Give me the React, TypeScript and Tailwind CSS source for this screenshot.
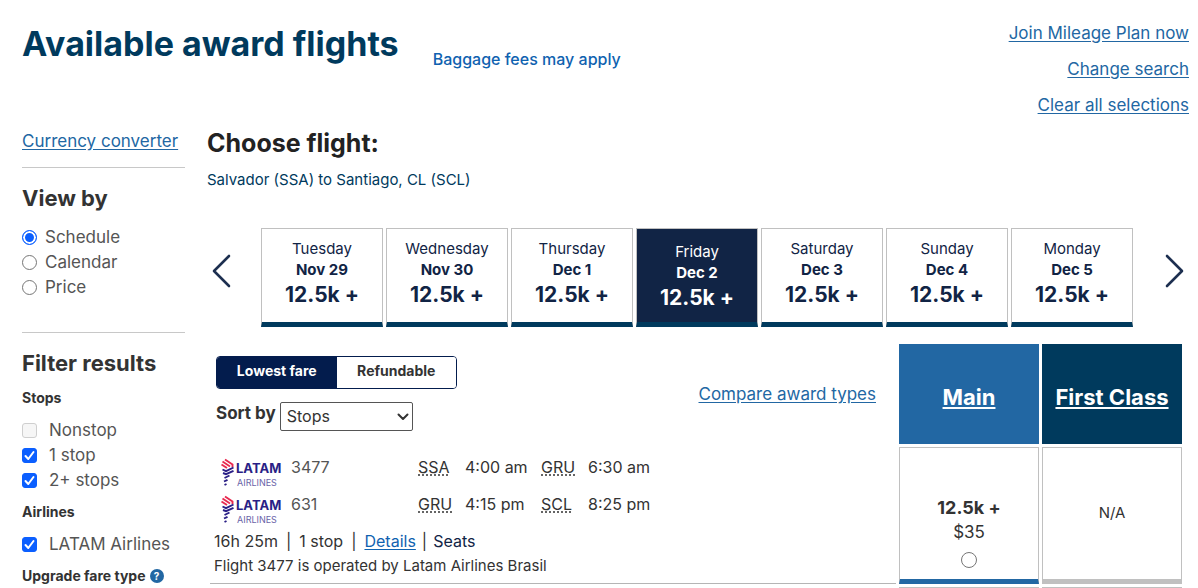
import { useState } from "react";
import type { ReactNode } from "react";

type Fare = { day: string; date: string; miles: string };

type Segment = {
  flight: string;
  from: string;
  departs: string;
  to: string;
  arrives: string;
};

const fares: Fare[] = [
  { day: "Tuesday", date: "Nov 29", miles: "12.5k +" },
  { day: "Wednesday", date: "Nov 30", miles: "12.5k +" },
  { day: "Thursday", date: "Dec 1", miles: "12.5k +" },
  { day: "Friday", date: "Dec 2", miles: "12.5k +" },
  { day: "Saturday", date: "Dec 3", miles: "12.5k +" },
  { day: "Sunday", date: "Dec 4", miles: "12.5k +" },
  { day: "Monday", date: "Dec 5", miles: "12.5k +" },
];

const segments: Segment[] = [
  { flight: "3477", from: "SSA", departs: "4:00 am", to: "GRU", arrives: "6:30 am" },
  { flight: "631", from: "GRU", departs: "4:15 pm", to: "SCL", arrives: "8:25 pm" },
];

const headerLinks = ["Join Mileage Plan now", "Change search", "Clear all selections"];

const views = ["Schedule", "Calendar", "Price"];

function LatamLogo() {
  return (
    <svg width="62" height="30" viewBox="0 0 62 30" role="img" aria-label="LATAM Airlines" className="shrink-0">
      <g fill="none" strokeWidth="1.9">
        <path d="M4 1.500L11.500 6.500V9" stroke="#e8294f" />
        <path d="M1.500 3.500L9 8.500" stroke="#e8294f" />
        <path d="M0.500 6.500L6 10" stroke="#e8294f" />
        <path d="M1.500 11.500L5 13.200L12.500 9.500" stroke="#2a1f86" />
        <path d="M2 15L5 16.200L12.500 12.800" stroke="#2a1f86" />
        <path d="M3.500 20L8.500 17.500" stroke="#2a1f86" />
        <path d="M3 23.500L6.500 21.800" stroke="#2a1f86" />
        <path d="M3.500 27L5.500 26" stroke="#2a1f86" />
      </g>
      <text x="15" y="15" fontSize="13" fontWeight="700" fill="#2a1f86">
        LATAM
      </text>
      <text x="16" y="28" fontSize="9" fill="#6a64a8">
        AIRLINES
      </text>
    </svg>
  );
}

function Radio({ name, checked, onChange, label }: { name: string; checked: boolean; onChange: () => void; label: string }) {
  return (
    <label className="flex h-[25px] items-center gap-2">
      <input
        type="radio"
        name={name}
        checked={checked}
        onChange={onChange}
        className="size-[15px] appearance-none rounded-full border border-[#767676] bg-white checked:border-[#0b5fff] checked:bg-[#0b5fff] checked:shadow-[inset_0_0_0_2px_white]"
      />
      <span className="pb-0.5">{label}</span>
    </label>
  );
}

function Check({ label, defaultChecked, disabled }: { label: string; defaultChecked?: boolean; disabled?: boolean }) {
  return (
    <label className="flex h-[25px] items-center gap-3">
      <span className="grid size-[15px] shrink-0">
        <input
          type="checkbox"
          defaultChecked={defaultChecked}
          disabled={disabled}
          className="peer col-start-1 row-start-1 size-[15px] appearance-none rounded-[3px] border border-[#767676] bg-white checked:border-[#0b5fff] checked:bg-[#0b5fff] disabled:border-[#cfcfcf] disabled:bg-[#f6f6f6]"
        />
        <svg
          viewBox="0 0 15 15"
          className="pointer-events-none invisible col-start-1 row-start-1 size-[15px] peer-checked:visible"
          fill="none"
          stroke="white"
          strokeWidth="2"
          strokeLinecap="round"
          strokeLinejoin="round"
        >
          <path d="M3.500 8l2.800 3L11.500 4" />
        </svg>
      </span>
      <span className="pb-0.5 whitespace-nowrap">{label}</span>
    </label>
  );
}

function Arrow({ label, d }: { label: string; d: string }) {
  return (
    <button type="button" aria-label={label} className="shrink-0">
      <svg width="20" height="34" viewBox="0 0 20 34" fill="none" stroke="#1d2f50" strokeWidth="2.6" strokeLinecap="round" strokeLinejoin="round">
        <path d={d} />
      </svg>
    </button>
  );
}

function SideHeading({ children }: { children: ReactNode }) {
  return <h3 className="text-[14px] leading-5 font-bold text-[#333]">{children}</h3>;
}

function Sidebar() {
  const [view, setView] = useState("Schedule");

  return (
    <aside className="w-[163px] shrink-0 text-[17px] leading-6 text-[#555]">
      <a href="#currency" className="block h-[38px] whitespace-nowrap text-[#2267a3] underline underline-offset-2">
        Currency converter
      </a>
      <section className="border-t border-[#c8c8c8] pt-[14px] pb-8">
        <h2 className="mb-[11px] text-[22px] leading-8 font-bold text-[#333]">View by</h2>
        {views.map((item) => (
          <Radio key={item} name="view" label={item} checked={view === item} onChange={() => setView(item)} />
        ))}
      </section>
      <section className="border-t border-[#c8c8c8] pt-[14px]">
        <h2 className="text-[22px] leading-8 font-bold whitespace-nowrap text-[#333]">Filter results</h2>
        <div className="mt-[9px]">
          <SideHeading>Stops</SideHeading>
          <div className="mt-[10px]">
            <Check label="Nonstop" disabled />
            <Check label="1 stop" defaultChecked />
            <Check label="2+ stops" defaultChecked />
          </div>
        </div>
        <div className="mt-[9px]">
          <SideHeading>Airlines</SideHeading>
          <div className="mt-[10px]">
            <Check label="LATAM Airlines" defaultChecked />
          </div>
        </div>
        <div className="mt-[9px] flex items-center gap-1 whitespace-nowrap">
          <SideHeading>Upgrade fare type</SideHeading>
          <button type="button" aria-label="About upgrade fare types" className="grid size-[14px] place-items-center rounded-full bg-[#2267a3] text-[10px] leading-3 font-bold text-white">
            ?
          </button>
        </div>
      </section>
    </aside>
  );
}

function DateStrip() {
  const [selected, setSelected] = useState("Dec 2");

  return (
    <div className="mt-9 flex items-start pr-1 pl-1">
      <div className="pt-[26px]">
        <Arrow label="Previous dates" d="M18 2L3 17l15 15" />
      </div>
      <div className="mr-8 ml-[30px] grid flex-1 grid-cols-7 gap-[3px]">
        {fares.map((fare) => (
          <button
            key={fare.date}
            type="button"
            onClick={() => setSelected(fare.date)}
            aria-pressed={selected === fare.date}
            className={`flex h-[99px] flex-col items-center border border-b-[5px] border-b-[#003a5d] ${
              selected === fare.date
                ? "border-x-[#c0c0c0] border-t-[#c0c0c0] bg-[#112445] pt-[13px] text-white"
                : "border-x-[#c0c0c0] border-t-[#c0c0c0] bg-white pt-[10px] text-[#112445]"
            }`}
          >
            <span className="text-[15px] leading-5">{fare.day}</span>
            <span className="text-[15px] leading-[22px] font-bold">{fare.date}</span>
            <span className="text-[21px] leading-7 font-bold">{fare.miles}</span>
          </button>
        ))}
      </div>
      <div className="pt-[26px]">
        <Arrow label="Next dates" d="M2 2l15 15L2 32" />
      </div>
    </div>
  );
}

function Controls() {
  const [fareType, setFareType] = useState("Lowest fare");

  return (
    <div className="flex items-start justify-between pt-3 pr-5 pl-[6px]">
      <div>
        <div className="flex w-[241px] overflow-hidden rounded-[4px] border border-[#031c4d] text-[14px] leading-5 font-bold">
          {["Lowest fare", "Refundable"].map((type) => (
            <button
              key={type}
              type="button"
              onClick={() => setFareType(type)}
              aria-pressed={fareType === type}
              className={`h-[31px] flex-1 pb-1 ${fareType === type ? "bg-[#031c4d] text-white" : "bg-white text-[#333]"}`}
            >
              {type}
            </button>
          ))}
        </div>
        <div className="mt-3 flex items-start gap-1">
          <label htmlFor="sort" className="text-[17px] leading-6 font-bold text-[#333]">
            Sort by
          </label>
          <div className="mt-px grid h-[29px] w-[133px] items-center">
            <select id="sort" defaultValue="Stops" className="col-start-1 row-start-1 h-[29px] appearance-none rounded-[2px] border border-[#555] bg-white pb-px pl-[6px] text-[16px] font-normal text-[#333]">
              <option>Stops</option>
              <option>Departure</option>
              <option>Arrival</option>
              <option>Duration</option>
            </select>
            <svg viewBox="0 0 12 8" className="pointer-events-none col-start-1 row-start-1 mr-1 h-2 w-3 justify-self-end" fill="none" stroke="#333" strokeWidth="2" strokeLinecap="round" strokeLinejoin="round">
              <path d="M1.500 1.500L6 6l4.500-4.500" />
            </svg>
          </div>
        </div>
      </div>
      <a href="#compare" className="mt-[26px] text-[17px] leading-6 font-normal whitespace-nowrap text-[#2267a3] underline underline-offset-2">
        Compare award types
      </a>
    </div>
  );
}

function FlightDetails() {
  return (
    <div className="pl-1 text-[#333]">
      {segments.map((segment) => (
        <div key={segment.flight} className="flex h-[37px] items-start pt-2 pl-[7px] text-[16px] leading-6">
          <span className="mt-[3px] mr-2 h-[30px]">
            <LatamLogo />
          </span>
          <span className="w-[127px] text-[#555]">{segment.flight}</span>
          <abbr title={segment.from} className="w-[47px] decoration-[#333] decoration-dotted underline-offset-2">
            {segment.from}
          </abbr>
          <span className="w-[76px] whitespace-nowrap">{segment.departs}</span>
          <abbr title={segment.to} className="w-[47px] decoration-[#333] decoration-dotted underline-offset-2">
            {segment.to}
          </abbr>
          <span className="whitespace-nowrap">{segment.arrives}</span>
        </div>
      ))}
      <p className="mt-2 flex text-[16px] leading-6 whitespace-nowrap">
        <span>16h 25m</span>
        <span className="mx-2">|</span>
        <span>1 stop</span>
        <span className="mx-2">|</span>
        <a href="#details" className="text-[#0f62b0] underline underline-offset-2">
          Details
        </a>
        <span className="mx-1.5">|</span>
        <a href="#seats" className="text-[#112445]">
          Seats
        </a>
      </p>
      <p className="mt-px text-[15px] leading-6">Flight 3477 is operated by Latam Airlines Brasil</p>
    </div>
  );
}

function Results() {
  return (
    <table className="mt-[14px] w-full table-fixed border-separate border-spacing-[3px] text-[#333]">
      <colgroup>
        <col />
        <col className="w-[140px]" />
        <col className="w-[140px]" />
      </colgroup>
      <thead>
        <tr className="h-[100px]">
          <th scope="col" className="p-0 text-left align-top">
            <Controls />
          </th>
          <th scope="col" className="bg-[#2267a3] p-0 pt-[6px]">
            <a href="#main" className="text-[22px] leading-7 font-bold text-white underline underline-offset-2">
              Main
            </a>
          </th>
          <th scope="col" className="bg-[#003a5d] p-0 pt-[6px]">
            <a href="#first" className="text-[22px] leading-7 font-bold whitespace-nowrap text-white underline underline-offset-2">
              First Class
            </a>
          </th>
        </tr>
      </thead>
      <tbody>
        <tr className="h-[137px]">
          <td className="border-b border-[#b5b5b5] p-0 align-top">
            <FlightDetails />
          </td>
          <td className="border border-b-[5px] border-[#c0c0c0] border-b-[#2267a3] p-0 pb-[11px] text-center align-bottom">
            <label className="flex flex-col items-center">
              <span className="text-[18px] leading-6 font-bold">12.5k +</span>
              <span className="text-[17px] leading-6">$35</span>
              <input type="radio" name="fare" className="mt-2 size-4 appearance-none rounded-full border border-[#767676] bg-white checked:border-[5px] checked:border-[#0b5fff]" />
            </label>
          </td>
          <td className="border border-b-[5px] border-[#c0c0c0] p-0 text-center align-middle text-[15px]">N/A</td>
        </tr>
        <tr>
          <td className="p-0" />
          <td className="border-t border-[#c0c0c0] p-0" />
          <td className="border-t border-[#c0c0c0] p-0" />
        </tr>
      </tbody>
    </table>
  );
}

export default function App() {
  return (
    <div className="max-h-screen overflow-hidden bg-white pr-[9px] pl-[22px] font-['Inter','Liberation_Sans',sans-serif]">
      <header className="flex items-start justify-between">
        <div className="flex gap-[34px]">
          <h1 className="pt-5 text-[34px] leading-[48px] font-bold whitespace-nowrap text-[#003a5d]">Available award flights</h1>
          <a href="#baggage" className="pt-[47px] text-[16px] leading-6 font-medium whitespace-nowrap text-[#0f62b0]">
            Baggage fees may apply
          </a>
        </div>
        <nav className="flex flex-col items-end gap-3 pt-[21px] text-[17px] leading-6 whitespace-nowrap text-[#2267a3]">
          {headerLinks.map((link) => (
            <a key={link} href="#top" className="underline underline-offset-2">
              {link}
            </a>
          ))}
        </nav>
      </header>

      <div className="mt-3 flex gap-[22px]">
        <Sidebar />
        <main className="min-w-0 flex-1">
          <h2 className="text-[25px] leading-7 font-bold text-[#222]">Choose flight:</h2>
          <p className="mt-[11px] text-[15px] leading-6 text-[#003a5d]">Salvador (SSA) to Santiago, CL (SCL)</p>
          <DateStrip />
          <div className="mr-1">
            <Results />
          </div>
        </main>
      </div>
    </div>
  );
}
